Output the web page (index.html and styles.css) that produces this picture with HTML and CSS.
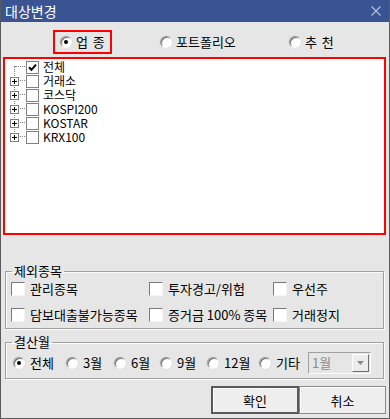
FILE: index.html
```html
<!DOCTYPE html>
<html>
    <head>
        <meta charset="utf-8">
        <title>대상변경</title>
        <link rel="stylesheet" href="styles.css">
    </head>
    <body>
        <div class="dialog">
            <div class="titlebar">
                <span class="title">대상변경</span>
                <svg class="close" width="10" height="10" viewBox="0 0 10 10"><path d="M0.5 0.5L9.5 9.5M9.5 0.5L0.5 9.5" stroke="#b9c3dd" stroke-width="1.1"/></svg>
            </div>

            <div class="tabs">
                <div class="opt tab marked"><span class="radio on"></span>업 종</div>
                <div class="opt tab"><span class="radio"></span>포트폴리오</div>
                <div class="opt tab"><span class="radio"></span>추 천</div>
            </div>

            <div class="tree">
                <div class="tree-list">
                    <div class="node first"><span class="twig"></span><span class="check on"><svg width="9" height="9" viewBox="0 0 9 9"><path d="M1 4.2L3.5 6.8L8 1.6" fill="none" stroke="#000" stroke-width="2"/></svg></span><span class="name">전체</span></div>
                    <div class="node"><span class="twig"><span class="plus"></span></span><span class="check"></span><span class="name">거래소</span></div>
                    <div class="node"><span class="twig"><span class="plus"></span></span><span class="check"></span><span class="name">코스닥</span></div>
                    <div class="node"><span class="twig"><span class="plus"></span></span><span class="check"></span><span class="name">KOSPI200</span></div>
                    <div class="node"><span class="twig"><span class="plus"></span></span><span class="check"></span><span class="name">KOSTAR</span></div>
                    <div class="node"><span class="twig"><span class="plus"></span></span><span class="check"></span><span class="name">KRX100</span></div>
                </div>
            </div>

            <fieldset class="group exclude">
                <legend>제외종목</legend>
                <div class="checks">
                    <div class="opt"><span class="check"></span>관리종목</div>
                    <div class="opt"><span class="check"></span>투자경고/위험</div>
                    <div class="opt"><span class="check"></span>우선주</div>
                    <div class="opt"><span class="check"></span>담보대출불가능종목</div>
                    <div class="opt"><span class="check"></span>증거금 100% 종목</div>
                    <div class="opt"><span class="check"></span>거래정지</div>
                </div>
            </fieldset>

            <fieldset class="group period">
                <legend>결산월</legend>
                <div class="months">
                    <div class="opt"><span class="radio on"></span>전체</div>
                    <div class="opt"><span class="radio"></span>3월</div>
                    <div class="opt"><span class="radio"></span>6월</div>
                    <div class="opt"><span class="radio"></span>9월</div>
                    <div class="opt"><span class="radio"></span>12월</div>
                    <div class="opt"><span class="radio"></span>기타</div>
                    <div class="combo"><span class="combo-text">1월</span><span class="combo-btn"><svg width="7" height="4" viewBox="0 0 7 4"><path d="M0 0H7L3.5 4Z" fill="#8a8a8a"/></svg></span></div>
                </div>
            </fieldset>

            <div class="buttons">
                <div class="btn default">확인</div>
                <div class="btn">취소</div>
            </div>
        </div>
    </body>
</html>
```

FILE: styles.css
```css
body {
    margin: 0;
    font-family: "Noto Sans CJK KR", "Noto Sans", sans-serif;
    font-size: 12px;
    color: #000;
}

.dialog {
    width: 390px;
    height: 419px;
    box-sizing: border-box;
    background-color: #e6e6e6;
    border: 1px solid #5a5a5a;
    border-top: none;
    overflow: hidden;
}

.titlebar {
    height: 22px;
    margin: 0 -1px;
    background-color: #3a5393;
    color: #fff;
    display: flex;
    align-items: center;
    justify-content: space-between;
    padding: 0 9px 0 5px;
}

.title {font-size: 14px; line-height: 22px;}
.close {display: block;}

/* radio + checkbox */
.opt {
    display: flex;
    align-items: center;
    white-space: nowrap;
    line-height: 16px;
}

.radio {
    width: 10px;
    height: 10px;
    border-radius: 50%;
    background-color: #fff;
    border: 1px solid #a0a0a0;
    border-right-color: #fff;
    border-bottom-color: #fff;
    box-shadow: inset 1px 1px 0 #6e6e6e, 0 0 0 0.5px #d0d0d0;
    margin-right: 5px;
    position: relative;
    flex: none;
}

.radio.on::after {
    content: "";
    position: absolute;
    left: 3px;
    top: 3px;
    width: 4px;
    height: 4px;
    border-radius: 50%;
    background-color: #000;
}

.check {
    width: 11px;
    height: 11px;
    background-color: #fff;
    border: 1px solid #7a7a7a;
    border-right-color: #f4f4f4;
    border-bottom-color: #f4f4f4;
    margin-right: 5px;
    flex: none;
    display: flex;
    align-items: center;
    justify-content: center;
}

/* top choice */
.tabs {
    height: 35px;
    box-sizing: border-box;
    padding: 8px 0 3px 52px;
    display: grid;
    grid-template-columns: 100px 129px auto;
    align-items: center;
}

.tab {
    justify-self: start;
    height: 24px;
    box-sizing: border-box;
    border: 2px solid transparent;
    padding: 0 5px;
    font-size: 13px;
    word-spacing: 2px;
}

.tab .radio {margin-right: 4px;}
.tab.marked {border-color: #ff0000;}

/* tree */
.tree {
    height: 178px;
    box-sizing: border-box;
    margin: 0 3px 0 2px;
    border: 2px solid #ff0000;
    background-color: #fff;
    padding-top: 1px;
}

.tree-list {position: relative;}

.tree-list::before {
    content: "";
    position: absolute;
    left: 9px;
    top: 6px;
    height: 70px;
    border-left: 1px dotted #808080;
}

.node {
    display: flex;
    align-items: center;
    height: 14px;
    font-size: 12px;
    line-height: 14px;
}

.name {line-height: 14px;}

.twig {
    width: 21px;
    height: 14px;
    position: relative;
    display: flex;
    align-items: center;
    padding-left: 5px;
    box-sizing: border-box;
}

.twig::after {
    content: "";
    position: absolute;
    left: 10px;
    right: 1px;
    top: 6px;
    border-top: 1px dotted #808080;
}

.plus {
    width: 7px;
    height: 7px;
    border: 1px solid #808080;
    background: #fff linear-gradient(#000, #000) center / 5px 1px no-repeat;
    position: relative;
    z-index: 1;
}

.plus::after {
    content: "";
    position: absolute;
    left: 3px;
    top: 1px;
    width: 1px;
    height: 5px;
    background-color: #000;
}

.node .check {
    border-color: #808080;
    margin-right: 4px;
}

/* group boxes */
.group {
    margin: 30px 5px 0 4px;
    padding: 0 5px 1px 5px;
    border: 1px solid #a0a0a0;
    box-shadow: inset 1px 1px 0 #fafafa, 1px 1px 0 #fafafa;
    min-width: 0;
}

.group legend {
    padding: 0 2px;
    margin-left: 1px;
    line-height: 12px;
    font-size: 13px;
}

.checks {
    display: grid;
    grid-template-columns: 138px 124px 1fr;
    grid-auto-rows: 24px;
    row-gap: 2px;
    font-size: 13px;
}

.checks .check {width: 12px; height: 12px;}

.period {margin-top: 7px;}

.months {
    display: grid;
    grid-template-columns: 53px 48px 46px 47px 52px 49px 63px;
    height: 29px;
    align-items: center;
    padding-left: 2px;
    font-size: 13px;
}

.combo {
    height: 22px;
    box-sizing: border-box;
    border: 1px solid #a0a0a0;
    border-right-color: #fdfdfd;
    border-bottom-color: #fdfdfd;
    display: flex;
    align-items: center;
    justify-content: space-between;
    padding: 1px;
}

.combo-text {color: #8c8c8c; padding-left: 2px;}

.combo-btn {
    width: 15px;
    height: 16px;
    border: 1px solid #fff;
    border-right-color: #6e6e6e;
    border-bottom-color: #6e6e6e;
    display: flex;
    align-items: center;
    justify-content: center;
    background-color: #ececec;
}

/* buttons */
.buttons {
    display: flex;
    justify-content: flex-end;
    margin-top: 7px;
    padding-right: 3px;
}

.btn {
    width: 87px;
    height: 28px;
    box-sizing: border-box;
    display: flex;
    align-items: center;
    justify-content: center;
    background-color: #eeeeee;
    border: 1px solid #8a8a8a;
    box-shadow: inset 1px 1px 0 #fff;
    font-size: 13px;
}

.btn.default {
    width: 88px;
    border: 2px solid #595959;
}
```
